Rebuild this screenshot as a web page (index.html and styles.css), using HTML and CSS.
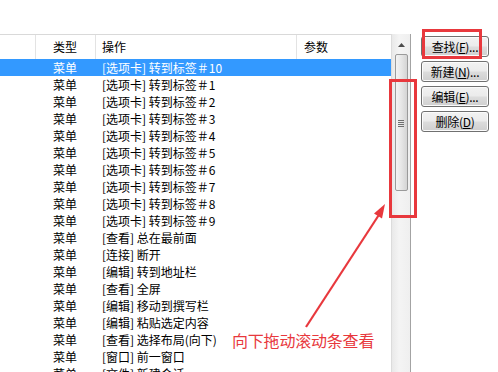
FILE: index.html
```html
<!DOCTYPE html>
<html lang="zh-CN">
<head>
<meta charset="utf-8">
<link rel="stylesheet" href="styles.css">
</head>
<body>
<div class="page">
  <div class="top-space"></div>
  <div class="main">
    <div class="list">
      <div class="header">
        <div class="hc"></div>
        <div class="hc c2">类型</div>
        <div class="hc c3">操作</div>
        <div class="hc c4 last">参数</div>
      </div>
      <div class="rows">
        <div class="row sel"><span class="c1"></span><span class="c2">菜单</span><span class="c3">[选项卡] 转到标签＃10</span><span class="c4"></span></div>
        <div class="row"><span class="c1"></span><span class="c2">菜单</span><span class="c3">[选项卡] 转到标签＃1</span><span class="c4"></span></div>
        <div class="row"><span class="c1"></span><span class="c2">菜单</span><span class="c3">[选项卡] 转到标签＃2</span><span class="c4"></span></div>
        <div class="row"><span class="c1"></span><span class="c2">菜单</span><span class="c3">[选项卡] 转到标签＃3</span><span class="c4"></span></div>
        <div class="row"><span class="c1"></span><span class="c2">菜单</span><span class="c3">[选项卡] 转到标签＃4</span><span class="c4"></span></div>
        <div class="row"><span class="c1"></span><span class="c2">菜单</span><span class="c3">[选项卡] 转到标签＃5</span><span class="c4"></span></div>
        <div class="row"><span class="c1"></span><span class="c2">菜单</span><span class="c3">[选项卡] 转到标签＃6</span><span class="c4"></span></div>
        <div class="row"><span class="c1"></span><span class="c2">菜单</span><span class="c3">[选项卡] 转到标签＃7</span><span class="c4"></span></div>
        <div class="row"><span class="c1"></span><span class="c2">菜单</span><span class="c3">[选项卡] 转到标签＃8</span><span class="c4"></span></div>
        <div class="row"><span class="c1"></span><span class="c2">菜单</span><span class="c3">[选项卡] 转到标签＃9</span><span class="c4"></span></div>
        <div class="row"><span class="c1"></span><span class="c2">菜单</span><span class="c3">[查看] 总在最前面</span><span class="c4"></span></div>
        <div class="row"><span class="c1"></span><span class="c2">菜单</span><span class="c3">[连接] 断开</span><span class="c4"></span></div>
        <div class="row"><span class="c1"></span><span class="c2">菜单</span><span class="c3">[编辑] 转到地址栏</span><span class="c4"></span></div>
        <div class="row"><span class="c1"></span><span class="c2">菜单</span><span class="c3">[查看] 全屏</span><span class="c4"></span></div>
        <div class="row"><span class="c1"></span><span class="c2">菜单</span><span class="c3">[编辑] 移动到撰写栏</span><span class="c4"></span></div>
        <div class="row"><span class="c1"></span><span class="c2">菜单</span><span class="c3">[编辑] 粘贴选定内容</span><span class="c4"></span></div>
        <div class="row"><span class="c1"></span><span class="c2">菜单</span><span class="c3">[查看] 选择布局(向下)</span><span class="c4"></span></div>
        <div class="row"><span class="c1"></span><span class="c2">菜单</span><span class="c3">[窗口] 前一窗口</span><span class="c4"></span></div>
        <div class="row"><span class="c1"></span><span class="c2">菜单</span><span class="c3">[文件] 新建会话</span><span class="c4"></span></div>
      </div>
    </div>
    <div class="scrollbar">
      <div class="sb-up"><svg width="7" height="4" viewBox="0 0 7 4"><polygon points="0,4 7,4 3.5,0" fill="#4d4d4d"/></svg></div>
      <div class="sb-thumb">
        <div class="grip"><i></i><i></i><i></i><i></i></div>
      </div>
    </div>
    <div class="side">
      <button class="btn">查找(<u>F</u>)...</button>
      <button class="btn">新建(<u>N</u>)...</button>
      <button class="btn">编辑(<u>E</u>)...</button>
      <button class="btn">删除(<u>D</u>)</button>
    </div>
  </div>

  <div class="mark mark-find"></div>
  <div class="mark mark-scroll"></div>
  <svg class="arrow" width="498" height="372" viewBox="0 0 498 372">
    <line x1="306" y1="327" x2="378.5" y2="215.5" stroke="#e8383d" stroke-width="2.2"/>
    <polygon points="385,204 382,218.5 374,213.5" fill="#e8383d"/>
  </svg>
  <div class="note">向下拖动滚动条查看</div>
</div>
</body>
</html>
```
FILE: styles.css
```css
html, body {
  margin: 0;
  padding: 0;
  background: #ffffff;
}
.page {
  position: relative;
  width: 498px;
  height: 372px;
  overflow: hidden;
  font-family: "Noto Sans CJK SC", "Noto Sans", sans-serif;
  font-size: 12px;
  color: #000;
}
.top-space {
  height: 34px;
}
.main {
  display: flex;
  height: 338px;
}
.list {
  width: 391px;
  flex: none;
  border-top: 1px solid #d9d9d9;
  overflow: hidden;
}
.header {
  display: grid;
  grid-template-columns: 36px 60px 201px 94px;
  height: 24px;
}
.hc {
  border-right: 1px solid #e3e3e3;
  line-height: 23px;
  white-space: nowrap;
}
.hc.last {
  border-right: none;
}
.header .c2 { padding-left: 17px; }
.header .c3 { padding-left: 6px; }
.header .c4 { padding-left: 7px; }
.row {
  display: grid;
  grid-template-columns: 36px 60px 201px 94px;
  height: 17px;
  line-height: 17px;
  white-space: nowrap;
}
.row .c2 { padding-left: 17px; }
.row .c3 { padding-left: 6px; }
.row.sel {
  background: #3399ff;
  color: #ffffff;
}
.scrollbar {
  width: 18px;
  flex: none;
  background: linear-gradient(to right, #e9e9e9, #f4f4f4 40%, #efefef);
  border-left: 1px solid #dcdcdc;
  border-right: 1px solid #a3a3a3;
  display: flex;
  flex-direction: column;
  align-items: center;
}
.sb-up {
  height: 19px;
  display: flex;
  align-items: center;
  justify-content: center;
  margin-top: 1px;
}
.sb-thumb {
  width: 13px;
  height: 137px;
  box-sizing: border-box;
  border: 1px solid #9a9a9a;
  border-radius: 2px;
  background: linear-gradient(to right, #f4f4f4, #e6e6e6 50%, #d4d4d4);
  display: flex;
  align-items: center;
  justify-content: center;
}
.grip {
  display: flex;
  flex-direction: column;
  gap: 1px;
  margin-top: 1px;
}
.grip i {
  display: block;
  width: 6px;
  height: 1px;
  background: #6f6f6f;
}
.side {
  flex: 1;
  display: flex;
  flex-direction: column;
  gap: 4px;
  padding: 2px 0 0 10px;
}
.btn {
  width: 68px;
  height: 21px;
  padding: 0;
  font-family: "Noto Sans CJK SC", "Noto Sans", sans-serif;
  font-size: 12px;
  line-height: 19px;
  color: #000;
  border: 1px solid #707070;
  border-radius: 3px;
  background: linear-gradient(to bottom, #f2f2f2 0%, #ebebeb 49%, #dddddd 51%, #cfcfcf 100%);
  box-shadow: inset 0 0 0 1px #fbfbfb;
  text-align: center;
  letter-spacing: -0.3px;
}
.btn u {
  text-decoration-thickness: 1px;
  text-underline-offset: 1px;
}
.mark {
  position: absolute;
  border: 3px solid #e8383d;
  box-sizing: border-box;
}
.mark-find {
  left: 422px;
  top: 29px;
  width: 60px;
  height: 30px;
}
.mark-scroll {
  left: 389px;
  top: 79px;
  width: 28px;
  height: 139px;
}
.arrow {
  position: absolute;
  left: 0;
  top: 0;
}
.note {
  position: absolute;
  left: 232px;
  top: 329px;
  font-size: 16px;
  line-height: 22px;
  color: #e8383d;
  white-space: nowrap;
  letter-spacing: -0.2px;
}
```
